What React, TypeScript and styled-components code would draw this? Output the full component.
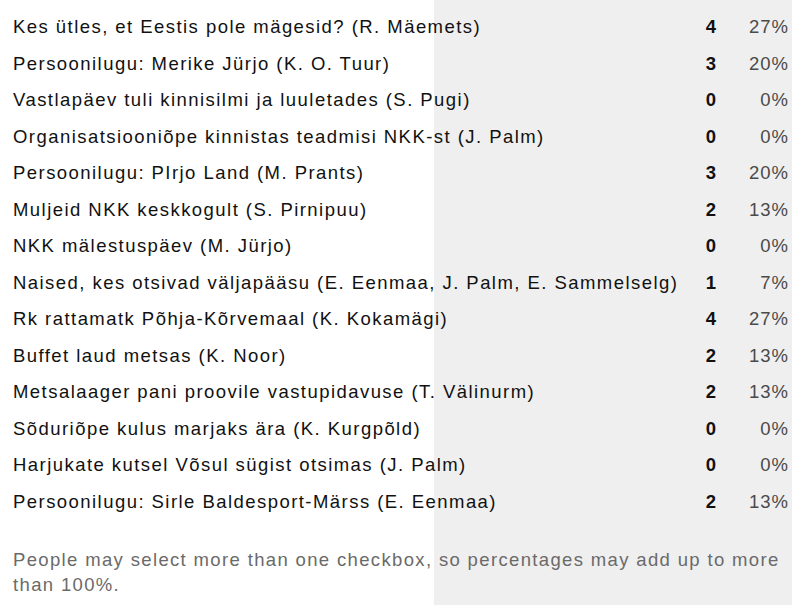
import React from "react";
import styled, { createGlobalStyle } from "styled-components";

const Global = createGlobalStyle`
  html, body { margin: 0; padding: 0; background: #ffffff; }
  body { font-family: "Liberation Sans", Arial, sans-serif; }
`;

const Page = styled.div`
  width: 800px;
  height: 605px;
  overflow: hidden;
  background: linear-gradient(
    to right,
    #ffffff 0,
    #ffffff 434px,
    #efefef 434px,
    #efefef 792px,
    #ffffff 792px
  );
`;

const Panel = styled.div`
  width: 792px;
  box-sizing: border-box;
  padding: 9px 3px 0 13px;
`;

const Results = styled.div`
  display: grid;
  grid-template-columns: 1fr auto 73px;
  grid-auto-rows: 36.5px;
  align-items: center;
  font-size: 18.5px;
  letter-spacing: 1.45px;
`;

const Title = styled.div`
  color: #111;
  white-space: nowrap;
`;

const Count = styled.div`
  font-weight: bold;
  color: #111;
  text-align: right;
  letter-spacing: 0;
`;

const Percent = styled.div`
  color: #4a4a4a;
  text-align: right;
  letter-spacing: 1px;
`;

const Note = styled.p`
  margin: 27px 0 0 0;
  font-size: 18.5px;
  letter-spacing: 1.35px;
  line-height: 25px;
  color: #6a6a6a;
`;

const rows: [string, number, string][] = [
  ["Kes ütles, et Eestis pole mägesid? (R. Mäemets)", 4, "27%"],
  ["Persoonilugu: Merike Jürjo (K. O. Tuur)", 3, "20%"],
  ["Vastlapäev tuli kinnisilmi ja luuletades (S. Pugi)", 0, "0%"],
  ["Organisatsiooniõpe kinnistas teadmisi NKK-st (J. Palm)", 0, "0%"],
  ["Persoonilugu: PIrjo Land (M. Prants)", 3, "20%"],
  ["Muljeid NKK keskkogult (S. Pirnipuu)", 2, "13%"],
  ["NKK mälestuspäev (M. Jürjo)", 0, "0%"],
  ["Naised, kes otsivad väljapääsu (E. Eenmaa, J. Palm, E. Sammelselg)", 1, "7%"],
  ["Rk rattamatk Põhja-Kõrvemaal (K. Kokamägi)", 4, "27%"],
  ["Buffet laud metsas (K. Noor)", 2, "13%"],
  ["Metsalaager pani proovile vastupidavuse (T. Välinurm)", 2, "13%"],
  ["Sõduriõpe kulus marjaks ära (K. Kurgpõld)", 0, "0%"],
  ["Harjukate kutsel Võsul sügist otsimas (J. Palm)", 0, "0%"],
  ["Persoonilugu: Sirle Baldesport-Märss (E. Eenmaa)", 2, "13%"],
];

export default function App() {
  return (
    <Page>
      <Global />
      <Panel>
        <Results>
          {rows.map(([title, count, pct]) => (
            <React.Fragment key={title}>
              <Title>{title}</Title>
              <Count>{count}</Count>
              <Percent>{pct}</Percent>
            </React.Fragment>
          ))}
        </Results>
        <Note>
          People may select more than one checkbox, so percentages may add up to more than 100%.
        </Note>
      </Panel>
    </Page>
  );
}
